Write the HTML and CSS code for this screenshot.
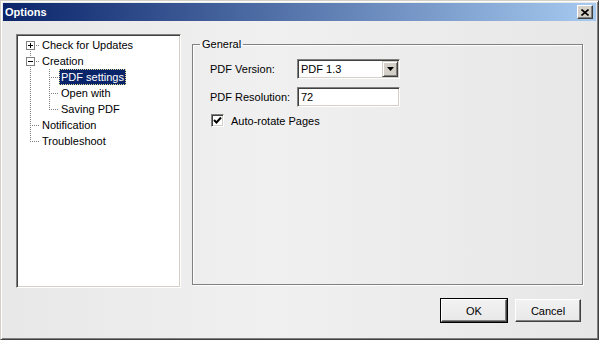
FILE: index.html
```html
<!DOCTYPE html>
<html lang="en">
<head>
  <meta charset="UTF-8">
  <title>Options</title>
  <link rel="stylesheet" href="styles.css">
</head>
<body>
  <div class="window">
    <div class="titlebar">
      <span class="title">Options</span>
      <span class="close-btn">
        <svg width="8" height="7" viewBox="0 0 8 7"><path d="M0.5 0.5 L7.5 6.5 M7.5 0.5 L0.5 6.5" stroke="#000" stroke-width="1.6" fill="none"/></svg>
      </span>
    </div>

    <div class="content">
      <div class="main">
        <ul class="tree">
          <li class="row"><span class="gut g0 first"><span class="exp plus"></span></span><span class="label">Check for Updates</span></li>
          <li class="row"><span class="gut g0 tee"><span class="exp minus"></span></span><span class="label">Creation</span></li>
          <li class="row"><span class="gut g0 pipe"></span><span class="gut g1 tee"></span><span class="label selected">PDF settings</span></li>
          <li class="row"><span class="gut g0 pipe"></span><span class="gut g1 tee"></span><span class="label">Open with</span></li>
          <li class="row"><span class="gut g0 pipe"></span><span class="gut g1 elbow"></span><span class="label">Saving PDF</span></li>
          <li class="row"><span class="gut g0 tee"></span><span class="label">Notification</span></li>
          <li class="row"><span class="gut g0 elbow"></span><span class="label">Troubleshoot</span></li>
        </ul>

        <fieldset class="group">
          <legend>General</legend>
          <div class="form">
            <label class="field-label">PDF Version:</label>
            <div class="combo">
              <span class="combo-text">PDF 1.3</span>
              <span class="combo-btn">
                <svg width="7" height="4" viewBox="0 0 7 4"><path d="M0 0 H7 L3.5 4 Z" fill="#000"/></svg>
              </span>
            </div>
            <label class="field-label">PDF Resolution:</label>
            <div class="textbox">72</div>
          </div>
          <div class="check-row">
            <span class="checkbox">
              <svg width="9" height="9" viewBox="0 0 9 9"><path d="M1 4 L3.5 6.5 L8 1.5" stroke="#000" stroke-width="2" fill="none"/></svg>
            </span>
            <span>Auto-rotate Pages</span>
          </div>
        </fieldset>
      </div>

      <div class="buttons">
        <button class="btn default">OK</button>
        <button class="btn">Cancel</button>
      </div>
    </div>
  </div>
</body>
</html>
```

FILE: styles.css
```css
* { box-sizing: border-box; }
body { margin: 0; font-family: "Liberation Sans", Arial, sans-serif; font-size: 11px; color: #000; }

.window {
  width: 599px; height: 340px;
  display: flex; flex-direction: column;
  border: 1px solid; border-color: #d4d0c8 #404040 #404040 #d4d0c8;
  box-shadow: inset 1px 1px #fff, inset -1px -1px #808080;
  padding: 2px;
  background: linear-gradient(to right, #e8e8e9, #f0f0f1 45%, #e7e7e8);
}

.titlebar {
  height: 18px; flex: none;
  display: flex; justify-content: space-between; align-items: center;
  padding: 0 3px 0 2px;
  background: linear-gradient(to right, #0a246a, #a6caf0);
}
.title { color: #fff; font-weight: bold; font-size: 11px; }
.close-btn {
  width: 16px; height: 14px;
  display: flex; align-items: center; justify-content: center;
  background: #d4d0c8;
  border: 1px solid; border-color: #fff #404040 #404040 #fff;
  box-shadow: inset -1px -1px #808080;
}

.content { flex: 1; display: flex; flex-direction: column; padding: 13px 13px 0 13px; }
.main { display: flex; gap: 11px; }

/* tree */
.tree {
  list-style: none; margin: 0; padding: 2px 0 0 1px;
  width: 165px; height: 254px; flex: none;
  background: #fff;
  border: 1px solid; border-color: #808080 #fff #fff #808080;
  box-shadow: inset 1px 1px #404040, inset -1px -1px #d4d0c8;
}
.row { display: flex; height: 16px; align-items: center; }
.gut { height: 16px; flex: none; display: flex; align-items: center; }
.g0 { width: 22px; --x: 12px; }
.g1 { width: 19px; --x: 9px; }
.gut {
  --dv: repeating-linear-gradient(to bottom, #808080 0 1px, transparent 1px 2px);
  --dh: repeating-linear-gradient(to right, #808080 0 1px, transparent 1px 2px);
}
.tee { background: var(--dh) var(--x) 8px / 10px 1px no-repeat, var(--dv) var(--x) 0 / 1px 16px no-repeat; }
.elbow { background: var(--dh) var(--x) 8px / 10px 1px no-repeat, var(--dv) var(--x) 0 / 1px 9px no-repeat; }
.first { background: var(--dh) var(--x) 8px / 10px 1px no-repeat, var(--dv) var(--x) 8px / 1px 8px no-repeat; }
.pipe { background: var(--dv) var(--x) 0 / 1px 16px no-repeat; }

.exp {
  width: 9px; height: 9px; margin-left: 8px;
  border: 1px solid #808080;
  background: linear-gradient(#000, #000) 1px 3px / 5px 1px no-repeat, #fff;
}
.exp.plus { background: linear-gradient(#000, #000) 1px 3px / 5px 1px no-repeat, linear-gradient(#000, #000) 3px 1px / 1px 5px no-repeat, #fff; }

.label { height: 16px; line-height: 16px; padding: 0 2px; white-space: nowrap; }
.label.selected { background: #0a246a; color: #fff; outline: 1px dotted #e0d890; outline-offset: -1px; }

/* group box */
.group {
  flex: 1; margin: 4px 0 0 0; height: 247px;
  border: 1px solid #808080; box-shadow: inset 1px 1px #fff, 1px 1px #fff;
  padding: 3px 10px 0 17px;
}
.group legend { padding: 0 2px; margin-left: -10px; line-height: 13px; }

.form { display: grid; grid-template-columns: 87px 103px; row-gap: 8px; align-items: center; margin-top: 5px; }
.combo, .textbox {
  height: 20px; background: #fff;
  border: 1px solid; border-color: #808080 #fff #fff #808080;
  box-shadow: inset 1px 1px #404040, inset -1px -1px #d4d0c8;
  display: flex; align-items: center;
}
.textbox { padding-left: 3px; }
.combo { padding: 1px; justify-content: space-between; }
.combo-text { padding-left: 2px; }
.combo-btn {
  width: 16px; height: 16px;
  display: flex; align-items: center; justify-content: center;
  background: #d4d0c8;
  border: 1px solid; border-color: #d4d0c8 #404040 #404040 #d4d0c8;
  box-shadow: inset 1px 1px #fff, inset -1px -1px #808080;
}

.check-row { display: flex; align-items: center; gap: 7px; margin-top: 7px; padding-left: 1px; }
.checkbox {
  width: 13px; height: 13px;
  display: flex; align-items: center; justify-content: center;
  background: #fff;
  border: 1px solid; border-color: #808080 #fff #fff #808080;
  box-shadow: inset 1px 1px #404040, inset -1px -1px #d4d0c8;
}

/* buttons */
.buttons { display: flex; justify-content: flex-end; gap: 8px; margin-top: 11px; padding-right: 2px; }
.btn {
  width: 66px; height: 23px;
  font-family: inherit; font-size: 11px; color: #000;
  background: linear-gradient(#f2f2f2, #e8e8e8);
  border: 1px solid; border-color: #fff #404040 #404040 #fff;
  box-shadow: inset -1px -1px #808080;
  padding: 0;
}
.btn.default { box-shadow: inset -1px -1px #808080, 0 0 0 1px #000; }
```
